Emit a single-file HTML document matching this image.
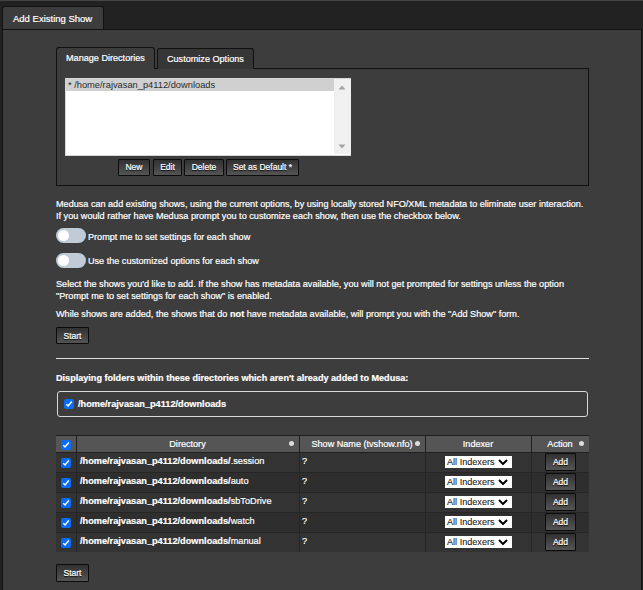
<!DOCTYPE html>
<html><head><meta charset="utf-8">
<style>
*{box-sizing:border-box;margin:0;padding:0}
html,body{width:643px;height:590px;overflow:hidden;background:#222;font-family:"Liberation Sans",sans-serif;font-size:9.1px;color:#fff;-webkit-text-stroke:0.2px currentColor}
.a{position:absolute}
.topline{left:0;top:0;width:643px;height:1px;background:#434540}
.otab{left:2px;top:6px;width:102px;height:24px;background:#3d3d3d;border:1px solid #111;border-bottom:none;border-radius:3px 3px 0 0}
.otab span{position:absolute;left:10px;top:6px;font-size:9.5px;white-space:nowrap}
.panel{left:2px;top:29px;width:640px;height:600px;background:#3d3d3d;border:1px solid #111}
.itab1{left:56px;top:47px;width:99px;height:22px;background:#3d3d3d;border:1px solid #111;border-bottom:none;border-radius:3px 3px 0 0;z-index:3}
.itab2{left:157px;top:48px;width:97px;height:21px;background:#363636;border:1px solid #111;border-bottom:none;border-radius:3px 3px 0 0;z-index:3}
.ipanel{left:56px;top:68px;width:533px;height:118px;border:1px solid #111;z-index:2}
.tabtxt{position:absolute;top:5px;white-space:nowrap}
.sel{left:65px;top:78px;width:286px;height:78px;background:#fff;border:1px solid #d6d6d6;z-index:4}
.sel .opt{position:absolute;left:0;top:0;width:268px;height:12px;background:#d0d0d0;color:#2b2b2b;padding-left:2px;line-height:12px;white-space:nowrap;font-size:9.3px;-webkit-text-stroke:0}
.sel .sb{position:absolute;left:268px;top:0;width:17px;height:75px;background:#f0f0f0}
.btn{position:absolute;font-size:8.5px;border:1px solid #0c0c0c;border-radius:1px;background:linear-gradient(#313131,#545454);color:#fff;text-align:center;white-space:nowrap;text-shadow:0 1px 1px #000}
.txt{position:absolute;left:56px;white-space:nowrap;line-height:12px}
.tog{position:absolute;left:56px;width:30px;height:15px;border-radius:7.5px;background:#c1cbd8}
.tog:after{content:"";position:absolute;left:2px;top:2px;width:10.5px;height:11px;border-radius:50%;background:#fff}
.cb{position:absolute;width:10px;height:10px;border-radius:2px;background:#0a6cf5}
.cb svg{position:absolute;left:1px;top:1px}
.sidx{width:66.7px;height:12px;background:#fff;color:#222;-webkit-text-stroke:0.1px #222;line-height:12px;white-space:nowrap}
.sidx span{position:absolute;left:2px;top:0}
.sidx svg{position:absolute;left:53px;top:3px}
</style></head><body>
<div class="a topline"></div>
<div class="a panel"></div>
<div class="a" style="left:2px;top:29px;width:102px;height:1px;background:#111;z-index:5"></div>
<div class="a otab"><span>Add Existing Show</span></div>
<div class="a ipanel"></div>
<div class="a itab1"><span class="tabtxt" style="left:9px">Manage Directories</span></div>
<div class="a itab2"><span class="tabtxt" style="left:9px;top:4.6px">Customize Options</span></div>
<div class="a sel"><div class="opt">* /home/rajvasan_p4112/downloads</div><div class="sb"><svg class="a" style="left:4px;top:6px" width="8" height="5" viewBox="0 0 8 5"><path d="M0.5 4.5 L4 0.5 L7.5 4.5Z" fill="#a3a3a3"/></svg><svg class="a" style="left:4px;top:65px" width="8" height="5" viewBox="0 0 8 5"><path d="M0.5 0.5 L4 4.5 L7.5 0.5Z" fill="#a3a3a3"/></svg></div></div>
<div class="btn" style="left:118px;top:159px;width:32px;height:17px;line-height:15px">New</div>
<div class="btn" style="left:153px;top:159px;width:29px;height:17px;line-height:15px">Edit</div>
<div class="btn" style="left:184px;top:159px;width:40px;height:17px;line-height:15px">Delete</div>
<div class="btn" style="left:226px;top:159px;width:73px;height:17px;line-height:15px">Set as Default *</div>
<div class="txt" style="top:198px">Medusa can add existing shows, using the current options, by using locally stored NFO/XML metadata to eliminate user interaction.<br><span style="font-size:9.15px">If you would rather have Medusa prompt you to customize each show, then use the checkbox below.</span></div>
<div class="tog" style="top:228px"></div><div class="txt" style="left:88px;top:231.3px">Prompt me to set settings for each show</div>
<div class="tog" style="top:253px"></div><div class="txt" style="left:88px;top:254.8px">Use the customized options for each show</div>
<div class="txt" style="top:278px;font-size:9.15px">Select the shows you'd like to add. If the show has metadata available, you will not get prompted for settings unless the option<br>"Prompt me to set settings for each show" is enabled.</div>
<div class="txt" style="top:308px;font-size:9.15px">While shows are added, the shows that do <b>not</b> have metadata available, will prompt you with the "Add Show" form.</div>
<div class="btn" style="left:56px;top:327px;width:33px;height:17px;line-height:17px">Start</div>
<div class="a" style="left:56px;top:358px;width:533px;height:1px;background:#e0e0e0"></div>
<div class="txt" style="top:372px;font-weight:bold">Displaying folders within these directories which aren't already added to Medusa:</div>
<div class="a" style="left:57px;top:391px;width:531px;height:26px;border:1px solid #d8d8d8;border-radius:3px"></div>
<div class="cb" style="left:64px;top:399px"><svg width="8" height="8" viewBox="0 0 8 8"><path d="M1.3 4.2 L3.1 6 L6.8 1.6" stroke="#fff" stroke-width="1.5" fill="none"/></svg></div>
<div class="txt" style="left:78px;top:398px;font-weight:bold;font-size:9.2px">/home/rajvasan_p4112/downloads</div>
<div class="a" style="left:56px;top:435px;width:533px;height:117px;background:#262626"></div>
<div class="a" style="left:56px;top:435px;width:533px;height:18px;background:#1f1f1f"></div>
<div class="a" style="left:56px;top:436px;width:20px;height:16px;background:#555"></div>
<div class="a" style="left:77px;top:436px;width:222px;height:16px;background:#555"></div>
<div class="a" style="left:300px;top:436px;width:125px;height:16px;background:#555"></div>
<div class="a" style="left:426px;top:436px;width:105px;height:16px;background:#555"></div>
<div class="a" style="left:532px;top:436px;width:57px;height:16px;background:#555"></div>
<div class="cb" style="left:61px;top:440px"><svg width="8" height="8" viewBox="0 0 8 8"><path d="M1.3 4.2 L3.1 6 L6.8 1.6" stroke="#fff" stroke-width="1.5" fill="none"/></svg></div>
<div class="txt" style="left:76px;width:223px;text-align:center;top:438px">Directory</div>
<div class="txt" style="left:299px;width:126px;text-align:center;top:438px">Show Name (tvshow.nfo)</div>
<div class="txt" style="left:425px;width:106px;text-align:center;top:438px">Indexer</div>
<div class="txt" style="left:531px;width:58px;text-align:center;top:438px">Action</div>
<div class="a" style="left:289px;top:441px;width:5px;height:5px;border-radius:50%;background:#ddd"></div>
<div class="a" style="left:415px;top:441px;width:5px;height:5px;border-radius:50%;background:#ddd"></div>
<div class="a" style="left:579px;top:441px;width:5px;height:5px;border-radius:50%;background:#ddd"></div>
<div class="a" style="left:56px;top:453px;width:20px;height:19px;background:#333"></div>
<div class="a" style="left:77px;top:453px;width:222px;height:19px;background:#333"></div>
<div class="a" style="left:300px;top:453px;width:125px;height:19px;background:#333"></div>
<div class="a" style="left:426px;top:453px;width:105px;height:19px;background:#333"></div>
<div class="a" style="left:532px;top:453px;width:57px;height:19px;background:#333"></div>
<div class="cb" style="left:61px;top:458px"><svg width="8" height="8" viewBox="0 0 8 8"><path d="M1.3 4.2 L3.1 6 L6.8 1.6" stroke="#fff" stroke-width="1.5" fill="none"/></svg></div>
<div class="txt" style="left:80px;top:455px;font-size:9.2px"><b>/home/rajvasan_p4112/downloads/</b>.session</div>
<div class="txt" style="left:302px;top:455px">?</div>
<div class="a sidx" style="left:445px;top:456px"><span>All Indexers</span><svg width="10" height="6" viewBox="0 0 10 6"><path d="M1 1 L5 5 L9 1" stroke="#000" stroke-width="2" fill="none"/></svg></div>
<div class="btn" style="left:545px;top:453px;width:31px;height:18px;line-height:16px">Add</div>
<div class="a" style="left:56px;top:473px;width:20px;height:19px;background:#2e2e2e"></div>
<div class="a" style="left:77px;top:473px;width:222px;height:19px;background:#2e2e2e"></div>
<div class="a" style="left:300px;top:473px;width:125px;height:19px;background:#2e2e2e"></div>
<div class="a" style="left:426px;top:473px;width:105px;height:19px;background:#2e2e2e"></div>
<div class="a" style="left:532px;top:473px;width:57px;height:19px;background:#2e2e2e"></div>
<div class="cb" style="left:61px;top:478px"><svg width="8" height="8" viewBox="0 0 8 8"><path d="M1.3 4.2 L3.1 6 L6.8 1.6" stroke="#fff" stroke-width="1.5" fill="none"/></svg></div>
<div class="txt" style="left:80px;top:475px;font-size:9.2px"><b>/home/rajvasan_p4112/downloads/</b>auto</div>
<div class="txt" style="left:302px;top:475px">?</div>
<div class="a sidx" style="left:445px;top:476px"><span>All Indexers</span><svg width="10" height="6" viewBox="0 0 10 6"><path d="M1 1 L5 5 L9 1" stroke="#000" stroke-width="2" fill="none"/></svg></div>
<div class="btn" style="left:545px;top:473px;width:31px;height:18px;line-height:16px">Add</div>
<div class="a" style="left:56px;top:493px;width:20px;height:19px;background:#333"></div>
<div class="a" style="left:77px;top:493px;width:222px;height:19px;background:#333"></div>
<div class="a" style="left:300px;top:493px;width:125px;height:19px;background:#333"></div>
<div class="a" style="left:426px;top:493px;width:105px;height:19px;background:#333"></div>
<div class="a" style="left:532px;top:493px;width:57px;height:19px;background:#333"></div>
<div class="cb" style="left:61px;top:498px"><svg width="8" height="8" viewBox="0 0 8 8"><path d="M1.3 4.2 L3.1 6 L6.8 1.6" stroke="#fff" stroke-width="1.5" fill="none"/></svg></div>
<div class="txt" style="left:80px;top:495px;font-size:9.2px"><b>/home/rajvasan_p4112/downloads/</b>sbToDrive</div>
<div class="txt" style="left:302px;top:495px">?</div>
<div class="a sidx" style="left:445px;top:496px"><span>All Indexers</span><svg width="10" height="6" viewBox="0 0 10 6"><path d="M1 1 L5 5 L9 1" stroke="#000" stroke-width="2" fill="none"/></svg></div>
<div class="btn" style="left:545px;top:493px;width:31px;height:18px;line-height:16px">Add</div>
<div class="a" style="left:56px;top:513px;width:20px;height:19px;background:#2e2e2e"></div>
<div class="a" style="left:77px;top:513px;width:222px;height:19px;background:#2e2e2e"></div>
<div class="a" style="left:300px;top:513px;width:125px;height:19px;background:#2e2e2e"></div>
<div class="a" style="left:426px;top:513px;width:105px;height:19px;background:#2e2e2e"></div>
<div class="a" style="left:532px;top:513px;width:57px;height:19px;background:#2e2e2e"></div>
<div class="cb" style="left:61px;top:518px"><svg width="8" height="8" viewBox="0 0 8 8"><path d="M1.3 4.2 L3.1 6 L6.8 1.6" stroke="#fff" stroke-width="1.5" fill="none"/></svg></div>
<div class="txt" style="left:80px;top:515px;font-size:9.2px"><b>/home/rajvasan_p4112/downloads/</b>watch</div>
<div class="txt" style="left:302px;top:515px">?</div>
<div class="a sidx" style="left:445px;top:516px"><span>All Indexers</span><svg width="10" height="6" viewBox="0 0 10 6"><path d="M1 1 L5 5 L9 1" stroke="#000" stroke-width="2" fill="none"/></svg></div>
<div class="btn" style="left:545px;top:513px;width:31px;height:18px;line-height:16px">Add</div>
<div class="a" style="left:56px;top:533px;width:20px;height:19px;background:#333"></div>
<div class="a" style="left:77px;top:533px;width:222px;height:19px;background:#333"></div>
<div class="a" style="left:300px;top:533px;width:125px;height:19px;background:#333"></div>
<div class="a" style="left:426px;top:533px;width:105px;height:19px;background:#333"></div>
<div class="a" style="left:532px;top:533px;width:57px;height:19px;background:#333"></div>
<div class="cb" style="left:61px;top:538px"><svg width="8" height="8" viewBox="0 0 8 8"><path d="M1.3 4.2 L3.1 6 L6.8 1.6" stroke="#fff" stroke-width="1.5" fill="none"/></svg></div>
<div class="txt" style="left:80px;top:535px;font-size:9.2px"><b>/home/rajvasan_p4112/downloads/</b>manual</div>
<div class="txt" style="left:302px;top:535px">?</div>
<div class="a sidx" style="left:445px;top:536px"><span>All Indexers</span><svg width="10" height="6" viewBox="0 0 10 6"><path d="M1 1 L5 5 L9 1" stroke="#000" stroke-width="2" fill="none"/></svg></div>
<div class="btn" style="left:545px;top:533px;width:31px;height:18px;line-height:16px">Add</div>
<div class="btn" style="left:56px;top:564px;width:33px;height:18px;line-height:16px">Start</div>
</body></html>
